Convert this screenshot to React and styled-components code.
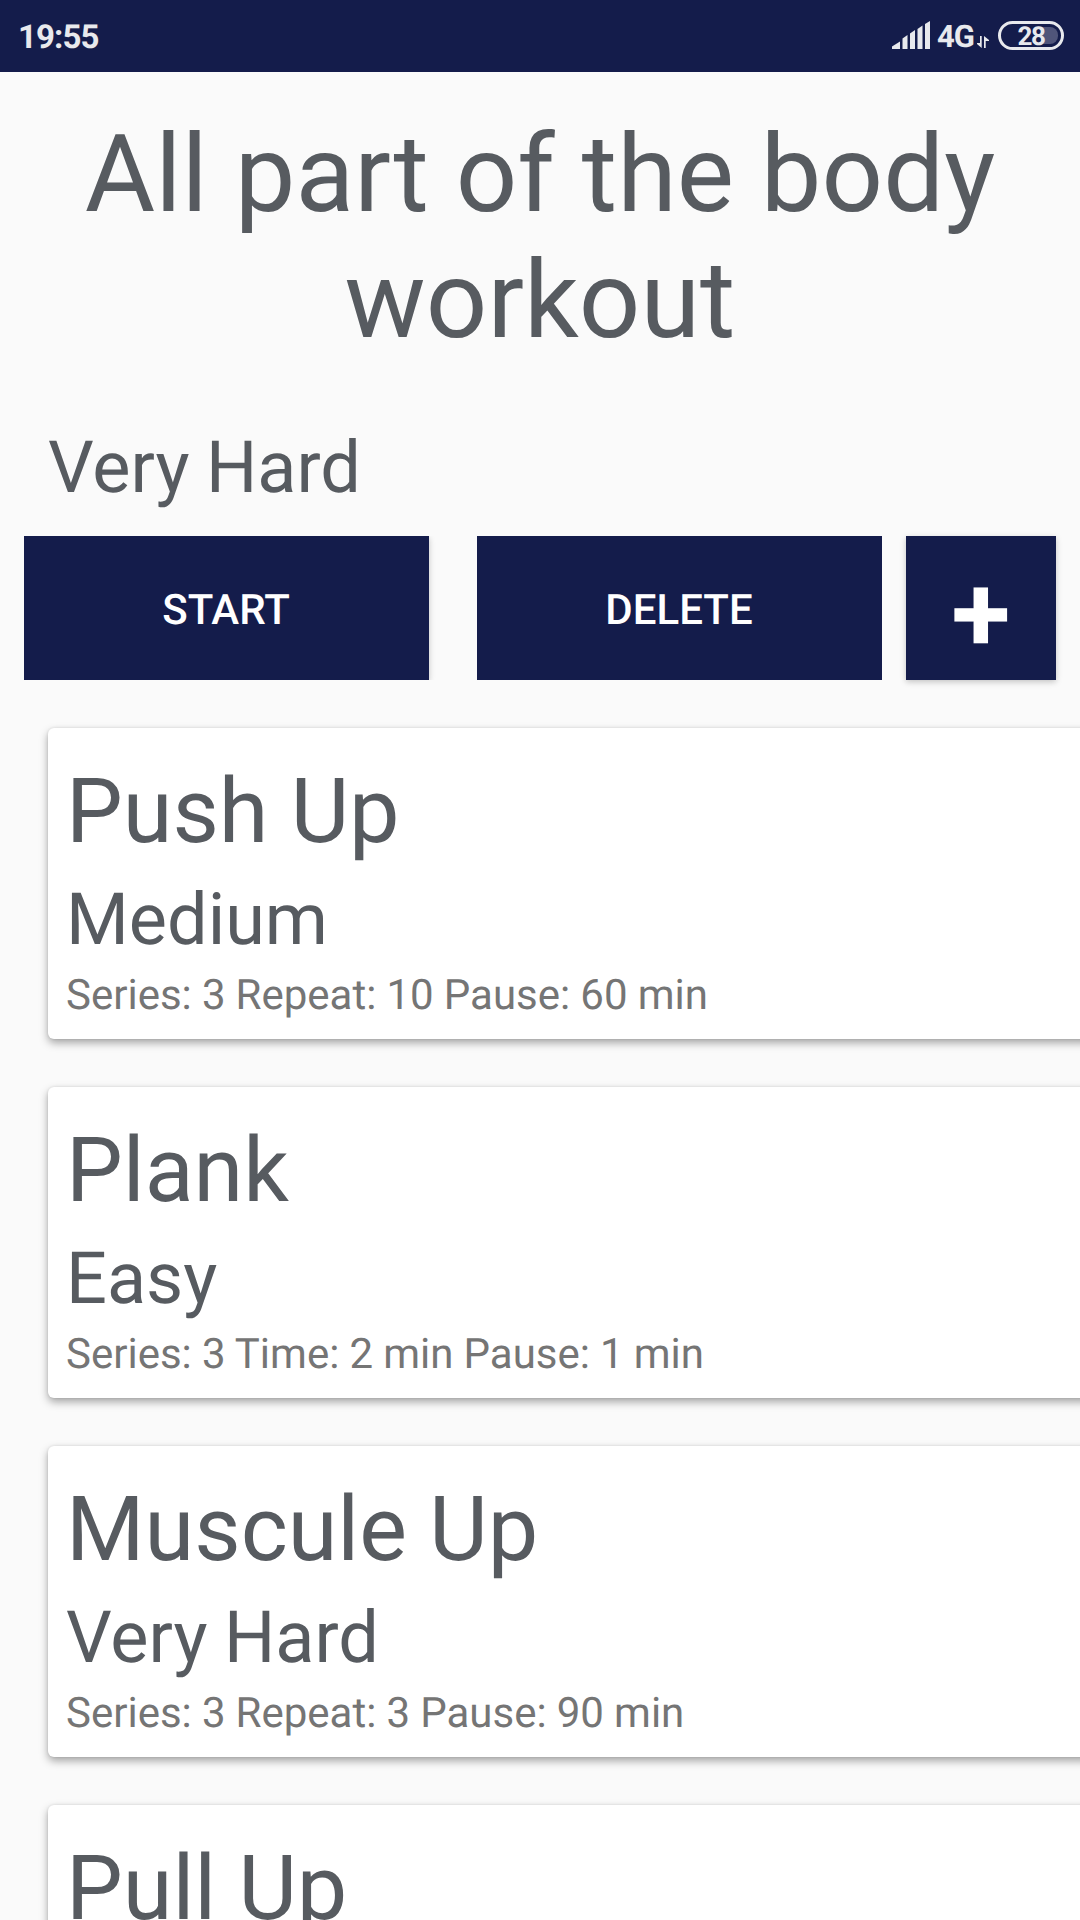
import React from "react";
import styled, { createGlobalStyle } from "styled-components";

const NAVY = "#141c4b";
const SLATE = "#575b60";
const STATUS = "#e8e9ed";

const GlobalStyle = createGlobalStyle`
  * { box-sizing: border-box; }
  html, body { margin: 0; padding: 0; background: #fafafa; }
  body {
    font-family: Roboto, "Liberation Sans", sans-serif;
    text-rendering: geometricPrecision;
  }
`;

const Screen = styled.div`
  display: flex;
  flex-direction: column;
  width: 1080px;
  height: 1920px;
  overflow: hidden;
  background: #fafafa;
`;

const StatusBar = styled.header`
  display: flex;
  align-items: center;
  flex: none;
  height: 72px;
  padding: 0 16px 0 18px;
  background: ${NAVY};
  color: ${STATUS};
`;

const Clock = styled.span`
  flex: 1;
  padding-top: 4px;
  font-size: 33px;
  line-height: 38px;
  font-weight: 700;
  letter-spacing: -0.9px;
`;

const StatusIcon = styled.svg`
  display: block;
  flex: none;
  margin-top: ${(p) => p.$top || "0"};
`;

const Network = styled.span`
  margin-left: 6px;
  padding-top: 2px;
  width: 40px;
  font-size: 31px;
  line-height: 36px;
  font-weight: 700;
  letter-spacing: -1px;
`;

const Battery = styled.div`
  position: relative;
  z-index: 0;
  display: flex;
  justify-content: center;
  align-items: center;
  width: 66px;
  height: 29px;
  margin: 0 0 1px 9px;
  padding-top: 2px;
  border: 3px solid ${STATUS};
  border-radius: 15px;
  font-size: 26px;
  line-height: 24px;
  font-weight: 700;
  letter-spacing: -1.5px;

  &::after {
    content: "";
    position: absolute;
    z-index: -1;
    top: 3px;
    right: 3px;
    width: 17px;
    height: 17px;
    border-radius: 0 8px 8px 0;
    background: #50557a;
  }
`;

const Title = styled.h1`
  flex: none;
  margin: 40px 0 0;
  padding: 0 48px;
  font-size: 108px;
  line-height: 126px;
  font-weight: 400;
  letter-spacing: 0.05px;
  text-align: center;
  color: ${SLATE};
`;

const Level = styled.h2`
  flex: none;
  margin: ${(p) => p.$margin};
  font-size: 72px;
  line-height: 84px;
  font-weight: 400;
  word-spacing: -1.5px;
  color: ${SLATE};
`;

const Actions = styled.div`
  display: flex;
  flex: none;
  gap: 24px;
  margin: 26px 24px 48px;
`;

const ButtonClip = styled.div`
  flex: 1;
  height: 144px;
  padding-right: ${(p) => p.$gap || "0"};
  overflow: hidden;
`;

const Button = styled.button`
  display: flex;
  justify-content: center;
  align-items: center;
  width: ${(p) => p.$width || "100%"};
  height: 144px;
  padding: ${(p) => p.$padding || "5px 1px 0 0"};
  border: 0;
  background: ${NAVY};
  box-shadow: 0 2px 6px rgba(0, 0, 0, 0.22);
  color: #fff;
  font-family: inherit;
  text-rendering: inherit;
  font-size: ${(p) => p.$size || "42px"};
  line-height: 1.17;
  font-weight: ${(p) => p.$weight || 500};
`;

const List = styled.main`
  display: flex;
  flex-direction: column;
  flex: none;
  gap: 48px;
  padding-left: 48px;
`;

const Card = styled.article`
  width: 1080px;
  height: 311px;
  padding: 31px 18px 0;
  border-radius: 6px;
  background: #fff;
  box-shadow: 0 4px 8px rgba(0, 0, 0, 0.34), 0 0 3px rgba(0, 0, 0, 0.1);
`;

const Name = styled.h3`
  margin: 0;
  font-size: 90px;
  line-height: 106px;
  font-weight: 400;
  color: ${SLATE};
`;

const Detail = styled.p`
  margin: 9px 0 0;
  font-size: 42px;
  line-height: 50px;
  word-spacing: -0.3px;
  color: #757575;
`;

const exercises = [
  { name: "Push Up", level: "Medium", detail: "Series: 3 Repeat: 10 Pause: 60 min" },
  { name: "Plank", level: "Easy", detail: "Series: 3 Time: 2 min Pause: 1 min" },
  { name: "Muscule Up", level: "Very Hard", detail: "Series: 3 Repeat: 3 Pause: 90 min" },
  { name: "Pull Up", level: "", detail: "" },
];

function SignalIcon() {
  return (
    <StatusIcon $top="-2px" width="39" height="28" viewBox="0 0 39 28" fill={STATUS}>
      <path d="M0 28v-2.500l8-5v7.500z" />
      <path d="M10.500 28V17.500l5-3.500v14z" />
      <path d="M18 28V12.500l5-3.500v19z" />
      <path d="M25.500 28V8l5-3.500v23.500z" />
      <path d="M33 28V3l5-3v28z" />
    </StatusIcon>
  );
}

function DataIcon() {
  return (
    <StatusIcon $top="12px" width="12" height="12" viewBox="0 0 12 12" fill={STATUS}>
      <path d="M3 0h1.700v12L0 8V7h3z" />
      <path d="M7 0l5 4v1H8.700v7H7z" />
    </StatusIcon>
  );
}

export default function App() {
  return (
    <Screen>
      <GlobalStyle />
      <StatusBar>
        <Clock>19:55</Clock>
        <SignalIcon />
        <Network>4G</Network>
        <DataIcon />
        <Battery>28</Battery>
      </StatusBar>
      <Title>All part of the body workout</Title>
      <Level $margin="62px 0 0 48px">Very Hard</Level>
      <Actions>
        <ButtonClip $gap="24px">
          <Button>START</Button>
        </ButtonClip>
        <ButtonClip>
          <Button $width="405px">DELETE</Button>
        </ButtonClip>
        <Button $width="150px" $size="108px" $weight={700} $padding="15px 0 0">+</Button>
      </Actions>
      <List>
        {exercises.map((e) => (
          <Card key={e.name}>
            <Name>{e.name}</Name>
            {e.level && <Level $margin="13px 0 0">{e.level}</Level>}
            {e.detail && <Detail>{e.detail}</Detail>}
          </Card>
        ))}
      </List>
    </Screen>
  );
}
